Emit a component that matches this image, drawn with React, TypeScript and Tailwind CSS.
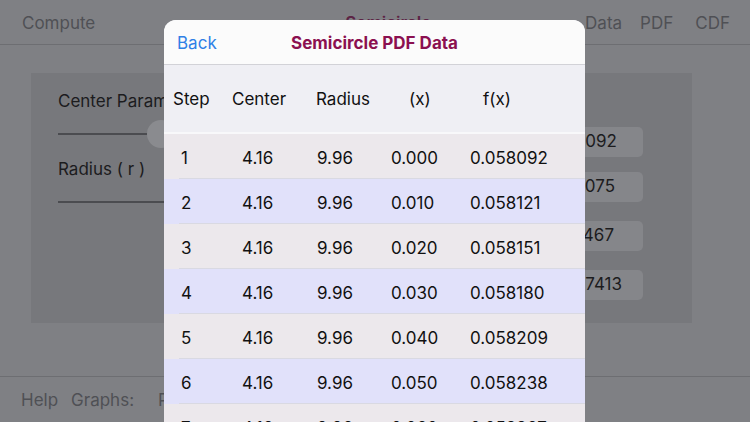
import React from "react";

const FONT = { fontFamily: "Inter, 'Liberation Sans', sans-serif" };

const ROWS = [
  { step: 1, x: "0.000", fx: "0.058092" },
  { step: 2, x: "0.010", fx: "0.058121" },
  { step: 3, x: "0.020", fx: "0.058151" },
  { step: 4, x: "0.030", fx: "0.058180" },
  { step: 5, x: "0.040", fx: "0.058209" },
  { step: 6, x: "0.050", fx: "0.058238" },
  { step: 7, x: "0.060", fx: "0.058267" },
];

// Output fields behind the dim overlay
const FIELDS = [
  { v: "0.058092", cls: "mt-[54px] pr-[26px]" },
  { v: "1.032075", cls: "mt-[15px] pr-[28px]" },
  { v: "0.000467", cls: "mt-[19px] pr-[29px]" },
  { v: "0.0017413", cls: "mt-[19px] pr-[21px]" },
];

export default function App() {
  return (
    <div className="relative h-[422px] w-[750px] overflow-hidden bg-[#7f8084] text-[17px]" style={FONT}>
      {/* Background page (dimmed) */}
      <div className="flex h-[45px] items-center border-b border-[#6d6e72] pt-[3px] text-[#4f5055]">
        <span className="ml-[22px]">Compute</span>
        <span className="ml-[250px] mt-[1px] font-semibold text-[#5c2444]">Semicircle</span>
        <span className="ml-auto">Data</span>
        <span className="ml-[18px]">PDF</span>
        <span className="ml-[22px] mr-[20px]">CDF</span>
      </div>

      <div className="ml-[31px] mt-[28px] flex h-[250px] w-[661px] bg-[#77787c]">
        <div className="ml-[27px] w-[120px] text-[#1c1c1e]">
          <div className="mt-[17px] whitespace-nowrap leading-[22px]">Center Parameter</div>
          <div className="relative mt-[21px] h-[2px] w-[200px] bg-[#4b4c50]">
            <div className="absolute -top-[13px] left-[89px] h-[28px] w-[28px] rounded-full bg-[#8a8b8f]" />
          </div>
          <div className="mt-[23px] whitespace-nowrap leading-[22px]">Radius ( r )</div>
          <div className="mt-[21px] h-[2px] w-[200px] bg-[#4b4c50]" />
        </div>
        <div className="ml-auto mr-[49px] flex w-[113px] flex-col">
          {FIELDS.map((f) => (
            <div
              key={f.v}
              className={`flex h-[30px] items-center justify-end rounded-[5px] bg-[#85868a] text-[#1c1c1e] ${f.cls}`}
            >
              {f.v}
            </div>
          ))}
        </div>
      </div>

      <div className="mt-[53px] flex h-[46px] items-center border-t border-[#6d6e72] pt-[2px] text-[#4f5055]">
        <span className="ml-[21px]">Help</span>
        <span className="ml-[13px]">Graphs:</span>
        <span className="ml-[24px]">PDF</span>
      </div>

      {/* Modal sheet */}
      <div className="absolute left-[164px] top-[20px] w-[421px] overflow-hidden rounded-t-[12px] bg-[#efeff4]">
        <div className="relative flex h-[45px] items-center justify-center border-b border-[#d2d2d7] bg-[#fbfbfb] pt-[3px]">
          <span className="absolute left-[13px]">
            <span className="text-[#2f80e6]">Back</span>
          </span>
          <span className="font-bold text-[#8b1050]">Semicircle PDF Data</span>
        </div>
        <div className="flex h-[69px] items-center border-b-2 border-[#f8f8fa] pl-[9px] pt-[2px] text-[#111]">
          <span className="w-[59px]">Step</span>
          <span className="w-[84px]">Center</span>
          <span className="w-[93px]">Radius</span>
          <span className="w-[74px]">(x)</span>
          <span>f(x)</span>
        </div>
        {ROWS.map((r, i) => (
          <div
            key={r.step}
            className={`relative flex h-[45px] items-center pl-[17px] pt-[5px] text-[#111] ${i % 2 === 0 ? "bg-[#ece8ec]" : "bg-[#e1e1fa]"}`}
          >
            <span className="w-[61px]">{r.step}</span>
            <span className="w-[75px]">4.16</span>
            <span className="w-[74px]">9.96</span>
            <span className="w-[79px]">{r.x}</span>
            <span>{r.fx}</span>
            <div className="absolute bottom-0 left-[15px] right-0 h-px bg-[#d9d9e2]" />
          </div>
        ))}
      </div>
    </div>
  );
}
